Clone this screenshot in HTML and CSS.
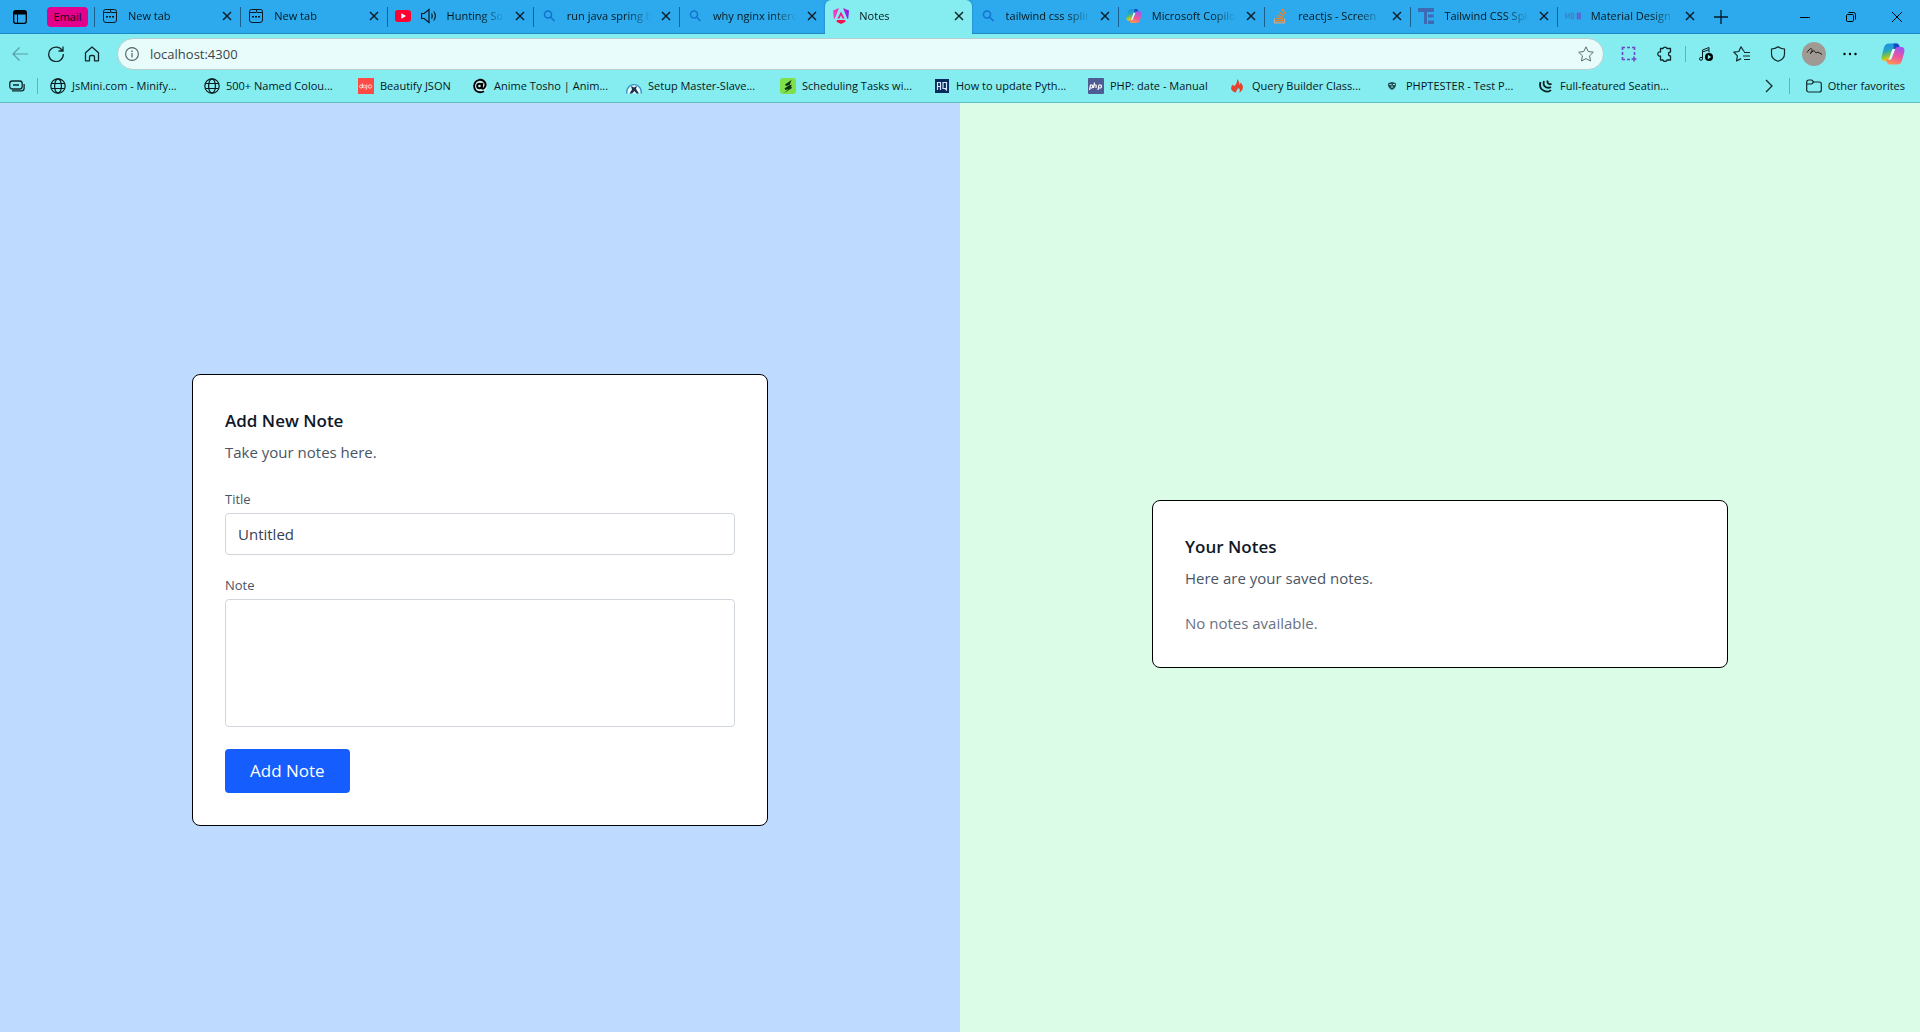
FILE: index.html
```
<!DOCTYPE html>
<html lang="en">
<head>
<meta charset="utf-8">
<title>Notes</title>
<meta name="viewport" content="width=device-width, initial-scale=1">
<link rel="stylesheet" href="styles.css">
</head>
<body>
<svg class="sprite" aria-hidden="true">
  <defs>
    <linearGradient id="cop-a" x1="0" y1="0" x2="0.3" y2="1"><stop offset="0" stop-color="#1a8ee8"/><stop offset=".45" stop-color="#22a5c8"/><stop offset=".7" stop-color="#7cc04a"/><stop offset="1" stop-color="#fbd000"/></linearGradient>
    <linearGradient id="cop-b" x1="0.5" y1="0" x2="0.2" y2="1"><stop offset="0" stop-color="#a556e8"/><stop offset=".5" stop-color="#f0569a"/><stop offset="1" stop-color="#ff9a4d"/></linearGradient>
    <linearGradient id="ng" x1="0" y1="0" x2="1" y2="0"><stop offset="0" stop-color="#ff41c8"/><stop offset=".5" stop-color="#e520b0"/><stop offset="1" stop-color="#7a1fff"/></linearGradient>
  </defs>
  <symbol id="i-close" viewBox="0 0 10 10"><path d="M1 1l8 8M9 1l-8 8" fill="none" stroke="#0b1a24" stroke-width="1.4"/></symbol>
  <symbol id="i-newtab" viewBox="0 0 16 16"><path d="M3.5 1.5h9a2 2 0 0 1 2 2v8.500a2.500 2.500 0 0 1-2.500 2.500h-8a2.500 2.500 0 0 1-2.500-2.500v-8.500a2 2 0 0 1 2-2zM8.500 1.500v1.500a1.500 1.500 0 0 0 1.500 1.500h4.500M1.500 4.500h7" fill="none" stroke="#0b1a24"/><path d="M4 8h2v1.500h-2zM7 8h2v1.500h-2zM10 8h2v1.500h-2z" fill="#0b1a24"/></symbol>
  <symbol id="i-search" viewBox="0 0 16 16"><circle cx="7" cy="6.500" r="3.500" fill="none" stroke="#1272cf" stroke-width="1.5"/><path d="M9.500 9l4 4" stroke="#1272cf" stroke-width="1.6"/></symbol>
  <symbol id="i-copilot" viewBox="0 0 24 24"><path d="M8 1.500h7.500c1.600 0 2.300 1 2.800 2.500L19 6.500h-3c-1.800 0-2.700.8-3.300 2.600L10.300 16c-.6 2-1.500 3-3.300 3H4C1 19 0 17 .8 13.500L3 5.500C4 2.500 5.500 1.500 8 1.500z" fill="url(#cop-a)"/><path d="M12.500 1.500h3c1.600 0 2.300 1 2.800 2.500L19 6.500h-3c-1.500 0-2.500.6-3.100 2z" fill="#1648c8"/><path d="M16 22.500H8.500c-1.600 0-2.300-1-2.800-2.500L5 17.500h3c1.800 0 2.700-.8 3.300-2.600L13.700 8c.6-2 1.500-3 3.300-3h3c3 0 4 2 3.200 5.500L21 18.500c-1 3-2.500 4-5 4z" fill="url(#cop-b)"/><path d="M14.200 7h-2.700L8.600 15.500q-.6 2-1.800 2h3z" fill="#e8fbff"/></symbol>
  <symbol id="i-globe" viewBox="0 0 16 16"><g fill="none" stroke="#071c20" stroke-width="1.2"><circle cx="8" cy="8" r="7.200"/><ellipse cx="8" cy="8" rx="3.400" ry="7.200"/><path d="M1.500 5.500h13M1.500 10.500h13"/></g></symbol>
</svg>

<header class="browser">
  <div class="tabstrip">
    <div class="tabstrip-start">
      <button class="icon-btn" aria-label="Tab actions"><svg width="16" height="16" viewBox="0 0 16 16"><rect x="1.700" y="1.700" width="12.600" height="12.600" rx="2" fill="none" stroke="#000" stroke-width="1.300"/><path d="M2 2h12v3.500H2z"/><path d="M5.500 5v9" stroke="#000"/></svg></button>
      <button class="group">Email</button>
    </div>
    <div class="tabs">
      <div class="tab"><svg class="fav"><use href="#i-newtab"/></svg><button class="tab-title">New tab</button><button class="close" aria-label="Close tab"><svg><use href="#i-close"/></svg></button></div>
      <div class="tab"><svg class="fav"><use href="#i-newtab"/></svg><button class="tab-title">New tab</button><button class="close" aria-label="Close tab"><svg><use href="#i-close"/></svg></button></div>
      <div class="tab"><svg class="fav" viewBox="0 0 16 16"><rect y="2" width="16" height="12" rx="3" fill="#ff0033"/><path d="M6.300 5.300l4.700 2.700-4.700 2.700z" fill="#fff"/></svg><svg class="fav" viewBox="0 0 16 16"><path d="M.6 5.500h2.600L8 1.500v13l-4.800-4H.6zM10.500 5.500q1.500 2.500 0 5M12.800 3.500q3.200 4.500 0 9" fill="none" stroke="#0b1a24" stroke-width="1.200"/></svg><button class="tab-title">Hunting So</button><button class="close" aria-label="Close tab"><svg><use href="#i-close"/></svg></button></div>
      <div class="tab"><svg class="fav"><use href="#i-search"/></svg><button class="tab-title">run java spring b</button><button class="close" aria-label="Close tab"><svg><use href="#i-close"/></svg></button></div>
      <div class="tab"><svg class="fav"><use href="#i-search"/></svg><button class="tab-title">why nginx interc</button><button class="close" aria-label="Close tab"><svg><use href="#i-close"/></svg></button></div>
      <div class="tab active"><svg class="fav" viewBox="0 0 16 16"><path d="M0 2.500L6 0 1.800 10.500.8 11zM16 2.500L10 0l4.200 10.500 1 .5z" fill="url(#ng)"/><path d="M8 3.500l3.500 7h-2L8 7.300 6.500 10.500h-2z" fill="#f01a8c"/><path d="M4 12h8l.5 1.800L8 16l-4.500-2.200z" fill="#f5104f"/></svg><button class="tab-title">Notes</button><button class="close" aria-label="Close tab"><svg><use href="#i-close"/></svg></button></div>
      <div class="tab"><svg class="fav"><use href="#i-search"/></svg><button class="tab-title">tailwind css split</button><button class="close" aria-label="Close tab"><svg><use href="#i-close"/></svg></button></div>
      <div class="tab"><svg class="fav"><use href="#i-copilot"/></svg><button class="tab-title">Microsoft Copilo</button><button class="close" aria-label="Close tab"><svg><use href="#i-close"/></svg></button></div>
      <div class="tab"><svg class="fav" viewBox="0 0 16 16"><path d="M2.500 10.500v4.300h10v-4.300" fill="none" stroke="#c8a890" stroke-width="1.300"/><path d="M4 12.800h7M4.200 10.300l6.800.8M5 7.300l6.300 2M7 4l5.200 3.800M10 1l3.400 5" stroke="#f48024" stroke-width="1.400"/></svg><button class="tab-title">reactjs - Screen</button><button class="close" aria-label="Close tab"><svg><use href="#i-close"/></svg></button></div>
      <div class="tab"><svg class="fav" viewBox="0 0 16 16"><path d="M0 0h16v4H0zM6 4h4v12H6zM10 6.500h5.500v3H10zM10 12.500h6V16h-6z" fill="#3d69b5"/><path d="M9.500 4v12" stroke="#2caaed"/></svg><button class="tab-title">Tailwind CSS Spl</button><button class="close" aria-label="Close tab"><svg><use href="#i-close"/></svg></button></div>
      <div class="tab"><svg class="fav" viewBox="0 0 16 16"><path d="M.5 11V6l2 3 2-3v5M6.500 5.500v5h1.500q2-2.500 0-5z" fill="none" stroke="#3f86c8" stroke-width="1.300"/><path d="M12.500 5.500v5h2.500V8h-2 2V5.500z" fill="none" stroke="#6558c8" stroke-width="1.500"/></svg><button class="tab-title">Material Design</button><button class="close" aria-label="Close tab"><svg><use href="#i-close"/></svg></button></div>
    </div>
    <div class="tabstrip-end">
      <button class="icon-btn" aria-label="New tab"><svg width="14" height="14" viewBox="0 0 14 14"><path d="M7 0v14M0 7h14" stroke="#061824" stroke-width="1.300"/></svg></button>
      <div class="window-controls">
        <button class="win-btn" aria-label="Minimize"><svg width="10" height="10"><path d="M0 5.500h10" stroke="#000"/></svg></button>
        <button class="win-btn" aria-label="Restore"><svg width="10" height="10" viewBox="0 0 10 10" fill="none" stroke="#000"><rect x=".5" y="2.500" width="7" height="7" rx="1.200"/><path d="M2.500.5h5a2 2 0 0 1 2 2v5"/></svg></button>
        <button class="win-btn" aria-label="Close window"><svg width="10" height="10"><path d="M0 0l10 10M10 0L0 10" stroke="#000"/></svg></button>
      </div>
    </div>
  </div>

  <div class="toolbar">
    <div class="nav-buttons">
      <button class="icon-btn" aria-label="Back"><svg width="16" height="16" viewBox="0 0 16 16"><path d="M16 8H1M7.500 1.500L1 8l6.500 6.500" fill="none" stroke="#569fa5" stroke-width="1.200"/></svg></button>
      <button class="icon-btn" aria-label="Refresh"><svg width="16" height="16" viewBox="0 0 16 16"><path d="M14.500 5A7.300 7.300 0 1 0 15.300 8M15 .5V5h-4.500" fill="none" stroke="#10282b" stroke-width="1.300"/></svg></button>
      <button class="icon-btn" aria-label="Home"><svg width="16" height="16" viewBox="0 0 16 16"><path d="M1.500 6.800L8 1l6.500 5.800v8h-4V11a1.500 1.500 0 0 0-1.500-1.500H7A1.500 1.500 0 0 0 5.500 11v3.800h-4z" fill="none" stroke="#10282b" stroke-width="1.300" stroke-linejoin="round"/></svg></button>
    </div>
    <div class="address">
      <svg width="14" height="14" viewBox="0 0 14 14"><circle cx="7" cy="7" r="6.400" fill="none" stroke="#56605f" stroke-width="1.100"/><path d="M6.400 6h1.200v4.500H6.400zM6.300 3.500h1.400v1.400H6.300z" fill="#56605f"/></svg>
      <input class="url" type="text" aria-label="Address" value="localhost:4300">
      <button class="icon-btn" aria-label="Add to favorites"><svg width="16" height="16" viewBox="0 0 16 16"><path d="M8 .8l2.200 4.700 5.100.7-3.700 3.600.9 5.200L8 12.600 3.500 15l.9-5.200L.7 6.200l5.100-.7z" fill="none" stroke="#5b6d6e" stroke-linejoin="round"/></svg></button>
    </div>
    <div class="tools">
      <button class="icon-btn" aria-label="Screenshot"><svg width="16" height="16" viewBox="0 0 16 16" fill="none" stroke="#6a4bc4" stroke-width="1.600"><path d="M1.500 4V1.500H4M6 1.500h3M11 1.500h2.500V4M13.500 6v3M1.500 6v3M1.500 11v2.500H4M6 13.500h3M13 10.500v5M10.500 13h5"/></svg></button>
      <button class="icon-btn" aria-label="Extensions"><svg width="16" height="16" viewBox="0 0 16 16"><path d="M3.500 2.500H6a2.100 2.100 0 0 1 4 0h3.500V6a1.600 1.600 0 0 0 0 4v4H10a2.100 2.100 0 0 1-4 0H3.500v-4a2.100 2.100 0 1 1 0-4z" fill="none" stroke="#10282b" stroke-width="1.300" stroke-linejoin="round"/></svg></button>
      <span class="divider"></span>
      <button class="icon-btn" aria-label="Media control"><svg width="16" height="16" viewBox="0 0 16 16"><path d="M4.500 12.500V4l6.500-2.500v5M4.500 6L11 3.700" fill="none" stroke="#0b2023"/><circle cx="3" cy="12.800" r="1.500" fill="none" stroke="#0b2023"/><circle cx="11" cy="11" r="4" fill="#000"/><path d="M9.800 8.800l3.400 2.200-3.400 2.200z" fill="#85edef"/></svg></button>
      <button class="icon-btn" aria-label="Favorites"><svg width="18" height="16" viewBox="0 0 18 16"><path d="M10.500 4.800L8 .8 5.800 5.500l-5 .7 3.600 3.600-.9 5.200L8 12.600M11 6.500h6M10 10h7M11 13.500h6M10.500 5l1 .6" fill="none" stroke="#10282b" stroke-width="1.200" stroke-linejoin="round"/></svg></button>
      <button class="icon-btn" aria-label="Browser essentials"><svg width="16" height="16" viewBox="0 0 16 16"><path d="M8 .8q2.800 2 6.500 2.200V8q0 5-6.500 7.300Q1.500 13 1.500 8V3Q5.200 2.800 8 .8z" fill="none" stroke="#10282b" stroke-width="1.200"/></svg></button>
      <button class="icon-btn" aria-label="Profile"><svg width="24" height="24" viewBox="0 0 24 24"><circle cx="12" cy="12" r="12" fill="#a09a94"/><path d="M5 10.500q4-6 5-3t-2 4q4-4 5-2l1 1.500 2-1 4 2.500" fill="none" stroke="#1d1c1b"/></svg></button>
      <button class="icon-btn" aria-label="Settings and more"><svg width="16" height="16" viewBox="0 0 16 16"><circle cx="2.500" cy="8" r="1.200"/><circle cx="8" cy="8" r="1.200"/><circle cx="13.500" cy="8" r="1.200"/></svg></button>
      <button class="icon-btn copilot" aria-label="Copilot"><svg width="24" height="24"><use href="#i-copilot"/></svg></button>
    </div>
  </div>

  <nav class="bookmarks" aria-label="Favorites bar">
    <button class="icon-btn" aria-label="Saved tabs"><svg width="16" height="16" viewBox="0 0 16 16" fill="none" stroke="#10282b" stroke-width="1.300"><rect x=".8" y="3" width="12.400" height="8" rx="2.500"/><path d="M4 7h6M3 12.800h9.500a2.600 2.600 0 0 0 2.600-2.600V6"/></svg></button>
    <span class="divider"></span>
    <div class="bookmark-list">
      <a class="bookmark" href="#"><svg><use href="#i-globe"/></svg><span>JsMini.com - Minify...</span></a>
      <a class="bookmark" href="#"><svg><use href="#i-globe"/></svg><span>500+ Named Colou...</span></a>
      <a class="bookmark short" href="#"><svg viewBox="0 0 16 16"><path d="M0 0h16v16H0z" fill="#ff4a45"/><g fill="none" stroke="#ffd5d0"><circle cx="3" cy="8.500" r="1.500"/><path d="M4.500 5.500V10M8.800 6.500V10q0 1.500-1.300 1.500"/><circle cx="6.500" cy="8.500" r="1.300"/><circle cx="12" cy="8.500" r="1.700"/></g></svg><span>Beautify JSON</span></a>
      <a class="bookmark" href="#"><svg viewBox="0 0 16 16"><circle cx="8" cy="8" r="7" fill="#c4f5f6"/><g fill="none" stroke="#000"><circle cx="7.500" cy="8" r="2.300" stroke-width="2"/><path d="M10.500 4.800l-.8 4.700q.4 2 2.300.7 2.400-2.500 1.300-5Q11.500 1.300 7.300 1.800 2.300 3 2.100 8q.3 6 6 6.200 2.300 0 3.900-1" stroke-width="1.900"/></g></svg><span>Anime Tosho | Anim...</span></a>
      <a class="bookmark" href="#"><svg viewBox="0 0 16 16"><path d="M1 15.500A7.200 7.200 0 1 1 15 15.500" fill="#e8fbff" stroke="#2e8fc7" stroke-width="1.400"/><path d="M5 8l3 1.500L11 8l-1 3 3 4.500h-2.500L8.500 13 6 15.500H3.500l2.500-4z" fill="#17354a"/></svg><span>Setup Master-Slave...</span></a>
      <a class="bookmark" href="#"><svg viewBox="0 0 16 16"><rect width="16" height="16" rx="3" fill="#7ee04b"/><path d="M11.500 2L5 6.500l1 1.500 4-1.500-5.500 4 1 1.500 3-1-4.500 4 8-5-1-1.500 1-2-2.500 1z" fill="#123016"/></svg><span>Scheduling Tasks wi...</span></a>
      <a class="bookmark" href="#"><svg viewBox="0 0 16 16"><path d="M1 1h14v14H1z" fill="#05295c"/><path d="M3.500 12V4.500h3V12M3.500 8.500h3M9 4.500h3.500v6H9zM11 10.500l2 2" fill="none" stroke="#d7e9ff" stroke-width="1.200"/></svg><span>How to update Pyth...</span></a>
      <a class="bookmark medium" href="#"><svg viewBox="0 0 16 16"><rect width="16" height="16" rx="1" fill="#4f5b93"/><g fill="none" stroke="#fff" stroke-width="1.200"><path d="M1.500 12l1-5h1.500q1.500 1.500-.2 3H2.200M6.500 4.500l-1 5.500M6.200 7h1.600q.8.500.4 1.500l-.3 1.500M10 12l1-5h1.800q1.500 1.500-.2 3h-2"/></g></svg><span>PHP: date - Manual</span></a>
      <a class="bookmark" href="#"><svg viewBox="0 0 16 16"><path d="M7 1q3 3 2 5.500 1.500 0 1.500-2Q14 8 12.500 11.500 11 14 9 14.500q2-2.500-.5-4.500-2.500 2-2.500 4.500Q2 14 1 10.500 1 8 3 6.500q.5 1.500 1.500 1.500Q7.500 5 7 1z" fill="#e4432d"/></svg><span>Query Builder Class...</span></a>
      <a class="bookmark" href="#"><svg viewBox="0 0 16 16"><path d="M4 5.500q4-3 8 0 .5 4-4 6.500-4.500-2.500-4-6.500z" fill="#1e4f55"/><path d="M5.500 6.500h2M9 6.500h2M8 7.500v2.500" stroke="#9feff0"/></svg><span>PHPTESTER - Test P...</span></a>
      <a class="bookmark" href="#"><svg viewBox="0 0 16 16"><g fill="none" stroke="#0b2023" stroke-width="1.800"><path d="M2.500 4Q.8 10 5.500 12.500T13 12"/><path d="M6 3q-1.500 4.500 2 6.200 2.500 1.200 5-.2"/><path d="M9.500 2.500Q9 5 11 6q1.200.6 2.500-.2"/></g></svg><span>Full-featured Seatin...</span></a>
    </div>
    <button class="icon-btn" aria-label="More favorites"><svg width="16" height="16" viewBox="0 0 16 16"><path d="M5 2l6 6-6 6" fill="none" stroke="#10282b" stroke-width="1.300"/></svg></button>
    <span class="divider"></span>
    <a class="bookmark other" href="#"><svg viewBox="0 0 16 16"><path d="M.7 4a2 2 0 0 1 2-2h3l2 2h5.600a2 2 0 0 1 2 2v6a2 2 0 0 1-2 2H2.700a2 2 0 0 1-2-2zM.7 6h5l2-2" fill="none" stroke="#10282b" stroke-width="1.200"/></svg><span>Other favorites</span></a>
  </nav>
</header>

<main class="split">
  <section class="panel panel-add">
    <form class="card">
      <h2>Add New Note</h2>
      <p class="lead">Take your notes here.</p>
      <div class="field">
        <label for="title">Title</label>
        <input id="title" type="text" value="Untitled">
      </div>
      <div class="field">
        <label for="note">Note</label>
        <textarea id="note"></textarea>
      </div>
      <button class="submit" type="button">Add Note</button>
    </form>
  </section>
  <section class="panel panel-list">
    <div class="card">
      <h2>Your Notes</h2>
      <p class="lead">Here are your saved notes.</p>
      <p class="empty">No notes available.</p>
    </div>
  </section>
</main>
</body>
</html>
```
FILE: styles.css
```
*, *::before, *::after { box-sizing: border-box; }

body {
  margin: 0;
  min-height: 100vh;
  display: flex;
  flex-direction: column;
  font-family: "Segoe UI", "Open Sans", "Noto Sans", sans-serif;
  font-size: 15px;
}

h2, p { margin: 0; }
button, input, textarea { font: inherit; color: inherit; }
button { border: 0; padding: 0; background: none; }
svg { display: block; flex: none; }
.sprite { position: absolute; width: 0; height: 0; }

/* Browser frame */
.browser {
  background: #85edef;
  border-bottom: 1px solid #62bcc0;
  font-size: 11px;
  color: #06181c;
}

.icon-btn {
  display: flex;
  align-items: center;
  justify-content: center;
  width: 16px;
  height: 24px;
  flex: none;
}

.divider {
  width: 1px;
  height: 16px;
  background: #5fb4b9;
  flex: none;
}

/* Tab strip */
.tabstrip {
  display: flex;
  height: 34px;
  background: #2caaed;
  border-bottom: 1px solid #1c8ac4;
}

.tabstrip-start {
  display: flex;
  align-items: center;
  gap: 19px;
  width: 94px;
  padding-left: 12px;
}

.group {
  width: 41px;
  height: 20px;
  border-radius: 4px;
  background: #e3008c;
  color: #16000e;
  line-height: 20px;
}

.tabs {
  display: flex;
  flex: 1;
  min-width: 0;
}

.tab {
  display: flex;
  align-items: center;
  flex: 1 1 0;
  min-width: 0;
  padding: 0 8px 2px;
  gap: 10px;
  background: linear-gradient(#17618c, #17618c) left center / 1px 20px no-repeat;
}

.fav { width: 16px; height: 16px; }

.tab-title {
  flex: 1;
  min-width: 0;
  overflow: hidden;
  white-space: nowrap;
  text-align: left;
  -webkit-mask-image: linear-gradient(to right, #000 calc(100% - 24px), transparent);
  mask-image: linear-gradient(to right, #000 calc(100% - 24px), transparent);
}

.close {
  display: flex;
  align-items: center;
  justify-content: center;
  width: 10px;
  height: 20px;
}
.close svg { width: 10px; height: 10px; }

.tab.active {
  height: 34px;
  padding-bottom: 3px;
  background: #85edef;
  border-radius: 6px 6px 0 0;
  box-shadow: 0 0 2px #14699c;
  clip-path: inset(0 -3px 0 -3px);
}
.tab.active + .tab { background: none; }

.tabstrip-end {
  display: flex;
  align-items: center;
  justify-content: space-between;
  width: 217px;
  padding-left: 10px;
}

.window-controls { display: flex; }
.win-btn {
  display: flex;
  align-items: center;
  justify-content: center;
  width: 46px;
  height: 32px;
}

/* Toolbar */
.toolbar {
  display: flex;
  align-items: center;
  height: 40px;
}

.nav-buttons {
  display: flex;
  gap: 20px;
  padding: 0 17px 0 12px;
}

.address {
  display: flex;
  align-items: center;
  gap: 11px;
  flex: 1;
  height: 32px;
  padding: 0 9px 0 7px;
  border: 1px solid #b5cfce;
  border-radius: 16px;
  background: #e8fcfb;
}

.url {
  flex: 1;
  min-width: 0;
  border: 0;
  padding: 0;
  background: none;
  font-size: 13px;
  color: #3b4546;
}

.tools {
  display: flex;
  align-items: center;
  gap: 20px;
  padding: 0 15px 0 17px;
}
.tools .divider { margin: 0 -8px; }
.tools .copilot { width: 24px; margin-left: 3px; }

/* Favorites bar */
.bookmarks {
  display: flex;
  align-items: center;
  height: 28px;
  padding: 0 15px 5px 9px;
  gap: 12px;
}

.bookmark-list {
  display: flex;
  flex: 1;
  gap: 18px;
  min-width: 0;
  overflow: hidden;
}

.bookmark {
  display: flex;
  align-items: center;
  gap: 6px;
  flex: none;
  width: 136px;
  white-space: nowrap;
  color: inherit;
  text-decoration: none;
}
.bookmark svg { width: 16px; height: 16px; }
.bookmark.short { width: 96px; }
.bookmark.medium { width: 124px; }
.bookmark.other { width: auto; margin-left: 4px; }

/* Page */
.split {
  flex: 1;
  display: grid;
  grid-template-columns: 1fr 1fr;
}

.panel {
  display: flex;
  align-items: center;
  justify-content: center;
}
.panel-add { background: #bedbff; padding-top: 64px; }
.panel-list { background: #dbfce7; padding-top: 32px; }

.card {
  width: 60%;
  padding: 32px;
  background: #fff;
  border: 1px solid #000;
  border-radius: 8px;
}

.card h2 {
  margin-bottom: 4px;
  font-size: 17px;
  line-height: 28px;
  font-weight: 600;
  color: #101828;
}

.lead {
  margin-bottom: 20px;
  line-height: 26px;
  color: #4a5565;
}

.empty {
  line-height: 24px;
  color: #6a7282;
}

.field { margin-bottom: 16px; }
.field label {
  display: block;
  font-size: 13px;
  line-height: 28px;
  color: #4a5565;
}
.field input, .field textarea {
  display: block;
  width: 100%;
  border: 1px solid #d1d5dc;
  border-radius: 4px;
  background: #fff;
  padding: 4px 12px;
  color: #364153;
}
.field input { height: 42px; }
.field textarea { height: 128px; resize: none; }

.submit {
  display: block;
  margin-top: 22px;
  padding: 8px 25px;
  border-radius: 4px;
  background: #155dfc;
  color: #fff;
  font-size: 17px;
  line-height: 28px;
}
```
